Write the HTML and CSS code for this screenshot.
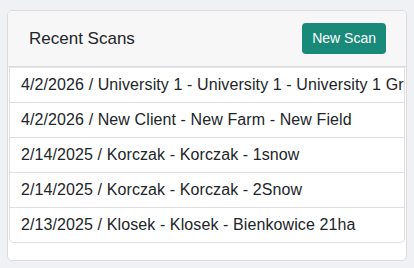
FILE: index.html
```html
<!DOCTYPE html>
<html lang="en">
<head>
    <meta charset="utf-8" />
    <title>Recent Scans</title>
    <link rel="stylesheet" href="styles.css">
</head>
<body>
    <div class="card">
        <div class="cardHeader">
            <span class="title">Recent Scans</span>
            <a href="#" class="newBtn">New Scan</a>
        </div>
        <div class="cardBody">
            <ul class="scanList">
                <li><a href="#">4/2/2026 / University 1 - University 1 - University 1 Grain Field</a></li>
                <li><a href="#">4/2/2026 / New Client - New Farm - New Field</a></li>
                <li><a href="#">2/14/2025 / Korczak - Korczak - 1snow</a></li>
                <li><a href="#">2/14/2025 / Korczak - Korczak - 2Snow</a></li>
                <li><a href="#">2/13/2025 / Klosek - Klosek - Bienkowice 21ha</a></li>
            </ul>
        </div>
    </div>
</body>
</html>
```

FILE: styles.css
```css
html, body, div, span, ul, li, a {
    margin: 0;
    padding: 0
}

body {
    background: #f0f1f5;
    padding: 10px 7px 8px 7px;
    font-family: "Liberation Sans", Arial, sans-serif;
    color: #212529
}

a {
    text-decoration: none;
    color: inherit
}

.card {
    background: #fff;
    border: 1px solid #dcdcdf;
    border-radius: 5px;
    overflow: hidden;
    padding-bottom: 17px
}

.cardHeader {
    display: flex;
    align-items: center;
    justify-content: space-between;
    height: 55px;
    padding: 0 20px 0 21px;
    background: #f7f7f7;
    border-bottom: 1px solid #dcdcdf
}

.title {
    font-size: 17px
}

.newBtn {
    display: inline-block;
    padding: 0 10px;
    height: 31px;
    line-height: 31px;
    font-size: 14px;
    color: #fff;
    background: #198a7a;
    border-radius: 4px
}

.cardBody {
    padding: 0 1px 0 1px
}

.scanList {
    list-style: none;
    border: 1px solid #dfdfe2;
    border-top: none;
    border-radius: 0 0 5px 5px;
    overflow: hidden
}

.scanList li {
    padding: 5px 11px;
    font-size: 16px;
    line-height: 24px;
    letter-spacing: 0.1px;
    white-space: nowrap;
    overflow: hidden;
    border-top: 1px solid #dfdfe2
}

.scanList li:first-child {
    border-top-color: #e6e6e8
}
```
